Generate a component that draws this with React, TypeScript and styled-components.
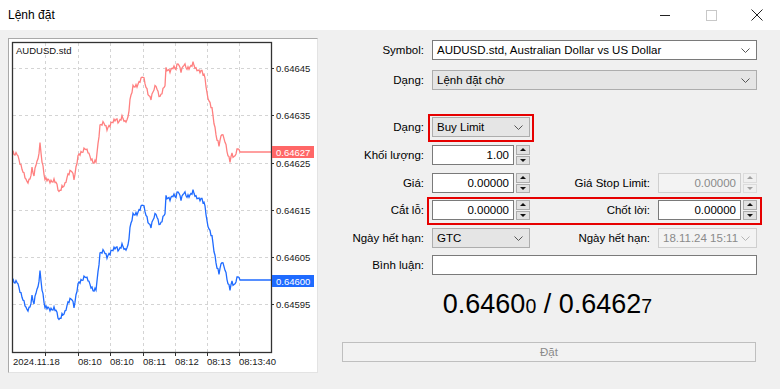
import React from 'react';
import styled, {createGlobalStyle} from 'styled-components';

const GlobalStyle = createGlobalStyle`
  html, body { margin: 0; padding: 0; background: #f0f0f0; }
  body { font-family: "Liberation Sans", Arial, sans-serif; font-size: 11.5px; color: #000; }
`

const Window = styled.div`
  width: 780px;
  height: 389px;
  background: #f0f0f0;
  display: flex;
  flex-direction: column;
  overflow: hidden;
`

const TitleBar = styled.div`
  height: 30px;
  flex-shrink: 0;
  background: #fff;
  display: flex;
  align-items: center;
  padding-left: 8px;
`

const Title = styled.div`
  flex: 1;
  font-size: 12px;
`

const WinButton = styled.div`
  width: 46px;
  height: 30px;
  display: flex;
  align-items: center;
  justify-content: center;
`

const Body = styled.div`
  display: flex;
  gap: 20px;
  padding: 8px 23px 0 8px;
`

const ChartPanel = styled.div`
  width: 310px;
  height: 335px;
  box-sizing: border-box;
  background: #fff;
  border-top: 1px solid #a9a9a9;
  border-left: 1px solid #a9a9a9;
  border-right: 1px solid #e3e3e3;
  border-bottom: 1px solid #e3e3e3;
  flex-shrink: 0;

  svg { display: block; }
`

const Form = styled.div`
  flex: 1;
  display: flex;
  flex-direction: column;
`

const Row = styled.div<{ $top: number }>`
  display: grid;
  grid-template-columns: 86px 98px 1fr 99px;
  column-gap: 8px;
  align-items: center;
  height: 20px;
  margin-top: ${p => p.$top}px;
`

const Label = styled.div`
  text-align: right;
  white-space: nowrap;
`

const Wide = styled.div`
  grid-column: 2 / -1;
  height: 20px;
  display: flex;
`

const Highlight = styled.div`
  grid-column: 2 / -1;
  display: grid;
  grid-template-columns: 98px 1fr 99px;
  column-gap: 8px;
  align-items: center;
  position: relative;

  &::after {
    content: '';
    position: absolute;
    inset: -3px -5px -5px -5px;
    border: 2px solid #e60000;
    pointer-events: none;
  }
`

const Select = styled.div<{ $variant: 'white' | 'gray' | 'disabled'; $mark?: boolean }>`
  flex: 1;
  height: 20px;
  box-sizing: border-box;
  display: flex;
  align-items: center;
  justify-content: space-between;
  padding: 0 6px 0 4px;
  position: relative;
  white-space: nowrap;
  background: ${p => p.$variant === 'white' ? '#fff' : p.$variant === 'gray' ? '#e5e5e5' : '#f3f3f3'};
  border: 1px solid ${p => p.$variant === 'white' ? '#7a7a7a' : p.$variant === 'gray' ? '#adadad' : '#cfcfcf'};
  color: ${p => p.$variant === 'disabled' ? '#8a8a8a' : '#000'};

  ${p => p.$mark && `
    &::after {
      content: '';
      position: absolute;
      inset: -4px -5px -6px -5px;
      border: 2px solid #e60000;
      pointer-events: none;
    }
  `}
`

const SpinField = styled.div`
  display: flex;
  gap: 2px;
  height: 20px;
`

const Input = styled.div<{ $disabled?: boolean }>`
  flex: 1;
  height: 20px;
  box-sizing: border-box;
  display: flex;
  align-items: center;
  justify-content: flex-end;
  padding-right: 4px;
  background: ${p => p.$disabled ? '#f3f3f3' : '#fff'};
  border: 1px solid ${p => p.$disabled ? '#cfcfcf' : '#7a7a7a'};
  color: ${p => p.$disabled ? '#8a8a8a' : '#000'};
`

const Spinner = styled.div`
  width: 14px;
  height: 20px;
  box-sizing: border-box;
  display: flex;
  flex-direction: column;
  gap: 1px;
`

const SpinBtn = styled.div<{ $disabled?: boolean; $down?: boolean }>`
  flex: 1;
  display: flex;
  align-items: center;
  justify-content: center;
  background: ${p => p.$disabled ? '#f0f0f0' : '#e1e1e1'};
  border: 1px solid ${p => p.$disabled ? '#dcdcdc' : '#adadad'};

  &::before {
    content: '';
    width: 0;
    height: 0;
    border-left: 3px solid transparent;
    border-right: 3px solid transparent;
    ${p => p.$down ? 'border-top' : 'border-bottom'}: 3px solid ${p => p.$disabled ? '#a0a0a0' : '#111'};
  }
`

const Quote = styled.div`
  margin-top: 14px;
  text-align: center;
  font-size: 27px;
  line-height: 30px;
  color: #000;
`

const Small = styled.span`
  font-size: 19.5px;
`

const SubmitButton = styled.div`
  margin-top: 21px;
  margin-left: 4px;
  width: 414px;
  height: 20px;
  box-sizing: border-box;
  border: 1px solid #bfbfbf;
  background: #f2f2f2;
  color: #8a8a8a;
  display: flex;
  align-items: center;
  justify-content: center;
`

const Chevron = ({color = '#555'}: { color?: string }) => (
  <svg width="9" height="5" viewBox="0 0 9 5">
    <polyline points="0.5,0.5 4.5,4.5 8.5,0.5" fill="none" stroke={color} strokeWidth="1"/>
  </svg>
)

const Spin = ({disabled}: { disabled?: boolean }) => (
  <Spinner>
    <SpinBtn $disabled={disabled}/>
    <SpinBtn $disabled={disabled} $down/>
  </Spinner>
)

const NumberField = ({value, disabled}: { value: string, disabled?: boolean }) => (
  <SpinField>
    <Input $disabled={disabled}>{value}</Input>
    <Spin disabled={disabled}/>
  </SpinField>
)

// ask price line, page coordinates; the bid line is the same shape 128px lower
const KEY: [number, number][] = [
  [13, 153], [15, 156], [17, 153], [20, 162], [24, 175], [27, 183], [30, 178], [32, 168], [34, 176], [36, 165],
  [38, 160], [40, 143], [42, 160], [45, 180], [50, 181], [54, 180], [56, 183], [59, 193], [62, 186], [65, 184],
  [68, 176], [70, 172], [72, 170], [74, 178], [76, 168], [78, 157], [82, 152], [85, 147], [88, 152], [90, 158],
  [93, 162], [96, 160], [98, 145], [100, 127], [104, 122], [107, 128], [110, 126], [113, 122], [116, 118],
  [119, 122], [122, 118], [125, 122], [128, 117], [130, 100], [133, 88], [137, 85], [140, 80], [143, 77],
  [146, 87], [149, 95], [151, 98], [154, 90], [156, 86], [158, 92], [160, 96], [163, 90], [165, 86], [166, 70],
  [170, 70], [173, 67], [176, 70], [178, 63], [181, 70], [184, 64], [187, 70], [190, 67], [193, 62], [196, 70],
  [199, 72], [202, 70], [205, 77], [207, 95], [209, 102], [212, 108], [215, 128], [217, 140], [219, 146],
  [222, 133], [225, 140], [228, 156], [230, 162], [232, 154], [234, 157], [236, 152], [238, 148], [240, 152],
  [271, 152]
]

const noise = (x: number) => 1.6 * Math.sin(x * 2.3) + 1.1 * Math.sin(x * 5.7 + 0.5)

const buildPath = () => {
  const pts: string[] = []
  for (let i = 0; i < KEY.length - 1; i++) {
    const [x0, y0] = KEY[i]
    const [x1, y1] = KEY[i + 1]
    for (let x = x0; x < x1; x++) {
      const t = (x - x0) / (x1 - x0)
      let y = y0 + (y1 - y0) * t
      if (x < 240) y += noise(x)
      pts.push(`${x},${y.toFixed(1)}`)
    }
  }
  const [lx, ly] = KEY[KEY.length - 1]
  pts.push(`${lx},${ly}`)
  return 'M' + pts.join(' L')
}

const LINE = buildPath()
const GRID_X = [45, 78, 110, 143, 175, 207, 239]
const PRICES = [
  {y: 68, label: '0.64645'},
  {y: 115, label: '0.64635'},
  {y: 163, label: '0.64625'},
  {y: 210, label: '0.64615'},
  {y: 257, label: '0.64605'},
  {y: 304, label: '0.64595'},
]
const TIMES = [
  {x: 13, label: '2024.11.18'},
  {x: 78, label: '08:10'},
  {x: 110, label: '08:10'},
  {x: 143, label: '08:11'},
  {x: 175, label: '08:12'},
  {x: 207, label: '08:13'},
  {x: 239, label: '08:13:40'},
]

const Chart = () => (
  <svg width="308" height="333" viewBox="9 39 308 333" fontFamily='"Liberation Sans", Arial, sans-serif'>
    <rect x="9" y="39" width="308" height="333" fill="#fff"/>
    {GRID_X.map(x => (
      <line key={x} x1={x + 0.5} y1="43" x2={x + 0.5} y2="352" stroke="#d4d4d4" strokeDasharray="3 3"/>
    ))}
    {PRICES.map(p => (
      <line key={p.y} x1="13" y1={p.y + 0.5} x2="271" y2={p.y + 0.5} stroke="#d4d4d4" strokeDasharray="3 3"/>
    ))}
    <path d={LINE} fill="none" stroke="#ff8080" strokeWidth="1.3"/>
    <path d={LINE} fill="none" stroke="#1f6bff" strokeWidth="1.3" transform="translate(0 128)"/>
    <rect x="12.5" y="42.5" width="259" height="310" fill="none" stroke="#333" strokeWidth="1.3"/>
    <text x="16" y="54" fontSize="9.5" fill="#111">AUDUSD.std</text>
    {PRICES.map(p => (
      <g key={p.label}>
        <line x1="272" y1={p.y + 0.5} x2="274" y2={p.y + 0.5} stroke="#333"/>
        <text x="276" y={p.y + 3.5} fontSize="9.5" fill="#1a1a1a">{p.label}</text>
      </g>
    ))}
    <rect x="272" y="146" width="42" height="12" fill="#ff6767"/>
    <text x="276" y="155.5" fontSize="9.5" fill="#fff">0.64627</text>
    <rect x="272" y="275" width="42" height="12" fill="#1f6bff"/>
    <text x="276" y="284.5" fontSize="9.5" fill="#fff">0.64600</text>
    {GRID_X.map(x => (
      <line key={x} x1={x + 0.5} y1="353" x2={x + 0.5} y2="356" stroke="#333"/>
    ))}
    {TIMES.map(t => (
      <text key={t.x} x={t.x} y="364.5" fontSize="9.5" fill="#1a1a1a">{t.label}</text>
    ))}
  </svg>
)

const App = () => (
  <Window>
    <GlobalStyle/>
    <TitleBar>
      <Title>Lệnh đặt</Title>
      <WinButton>
        <svg width="10" height="10" viewBox="0 0 10 10"><line x1="0" y1="5.5" x2="10" y2="5.5" stroke="#222"/></svg>
      </WinButton>
      <WinButton>
        <svg width="11" height="11" viewBox="0 0 11 11"><rect x="0.5" y="0.5" width="10" height="10" fill="none" stroke="#c8c8c8"/></svg>
      </WinButton>
      <WinButton>
        <svg width="12" height="12" viewBox="0 0 12 12">
          <line x1="0.5" y1="0.5" x2="11.5" y2="11.5" stroke="#222"/>
          <line x1="11.5" y1="0.5" x2="0.5" y2="11.5" stroke="#222"/>
        </svg>
      </WinButton>
    </TitleBar>
    <Body>
      <ChartPanel>
        <Chart/>
      </ChartPanel>
      <Form>
        <Row $top={2}>
          <Label>Symbol:</Label>
          <Wide>
            <Select $variant="white">AUDUSD.std, Australian Dollar vs US Dollar<Chevron/></Select>
          </Wide>
        </Row>
        <Row $top={10}>
          <Label>Dạng:</Label>
          <Wide>
            <Select $variant="gray">Lệnh đặt chờ<Chevron/></Select>
          </Wide>
        </Row>
        <Row $top={27}>
          <Label>Dạng:</Label>
          <Select $variant="gray" $mark>Buy Limit<Chevron/></Select>
        </Row>
        <Row $top={8}>
          <Label>Khối lượng:</Label>
          <NumberField value="1.00"/>
        </Row>
        <Row $top={8}>
          <Label>Giá:</Label>
          <NumberField value="0.00000"/>
          <Label>Giá Stop Limit:</Label>
          <NumberField value="0.00000" disabled/>
        </Row>
        <Row $top={7}>
          <Label>Cắt lỗ:</Label>
          <Highlight>
            <NumberField value="0.00000"/>
            <Label>Chốt lời:</Label>
            <NumberField value="0.00000"/>
          </Highlight>
        </Row>
        <Row $top={8}>
          <Label>Ngày hết hạn:</Label>
          <Select $variant="gray">GTC<Chevron/></Select>
          <Label>Ngày hết hạn:</Label>
          <Select $variant="disabled">18.11.24 15:11<Chevron color="#b5b5b5"/></Select>
        </Row>
        <Row $top={7}>
          <Label>Bình luận:</Label>
          <Wide>
            <Input/>
          </Wide>
        </Row>
        <Quote>0.6460<Small>0</Small> / 0.6462<Small>7</Small></Quote>
        <SubmitButton>Đặt</SubmitButton>
      </Form>
    </Body>
  </Window>
)

export default App
